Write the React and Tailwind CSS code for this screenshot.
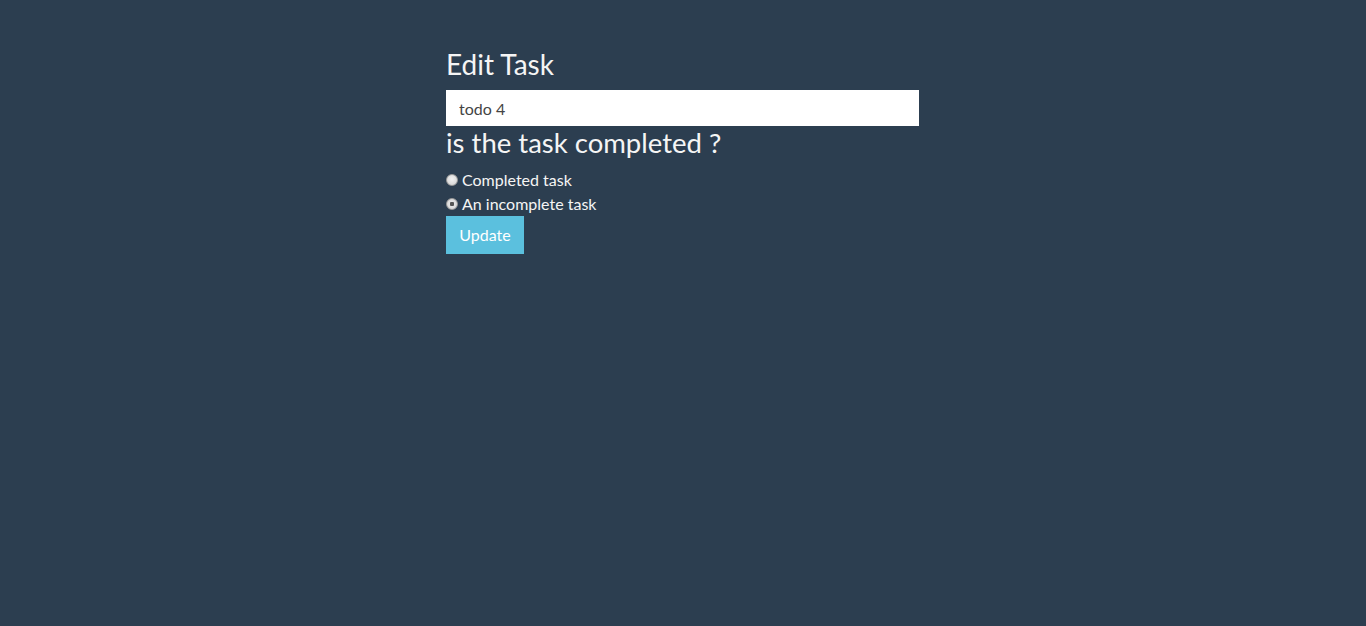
import React, { useState } from 'react'

const App = () => {
  const [title, setTitle] = useState("todo 4");
  const [done, setDone] = useState("no");
  const radio = "m-0 h-[12px] w-[12px] shrink-0 appearance-none rounded-full border border-[#9a9a9a] bg-[radial-gradient(circle_at_50%_40%,#f2f2f2,#cfcfcf)] checked:bg-[radial-gradient(circle,#555_0,#555_28%,#e4e4e4_36%,#cfcfcf_100%)]";
  return (
    <div className="min-h-[626px] w-full bg-[#2c3e50] font-['Lato',sans-serif] text-[#f5f5f5]">
      <form className="mx-auto w-[474px] pt-[49px]" onSubmit={(e) => e.preventDefault()}>
        <h3 className="text-[28px] leading-[1.1]">Edit Task</h3>
        <input
          type="text"
          value={title}
          onChange={(e) => setTitle(e.target.value)}
          className="mt-[10px] block h-[36px] w-[473px] bg-white pl-[13px] pr-3 pt-[2px] text-[16px] text-[#444] outline-none"
        />
        <h4 className="text-[27.5px] leading-[1.1] mt-[2px]">is the task completed ?</h4>
        <div className="mt-[10px] flex flex-col">
          <label className="flex h-[24px] items-center gap-[4px] text-[16px]">
            <input type="radio" name="done" checked={done === "yes"} onChange={() => setDone("yes")} className={radio} />
            Completed task
          </label>
          <label className="flex h-[24px] items-center gap-[4px] text-[16px]">
            <input type="radio" name="done" checked={done === "no"} onChange={() => setDone("no")} className={radio} />
            An incomplete task
          </label>
        </div>
        <button type="submit" className="block h-[38px] w-[78px] bg-[#5bc0de] text-[16px] text-white">Update</button>
      </form>
    </div>
  )
}

export default App
